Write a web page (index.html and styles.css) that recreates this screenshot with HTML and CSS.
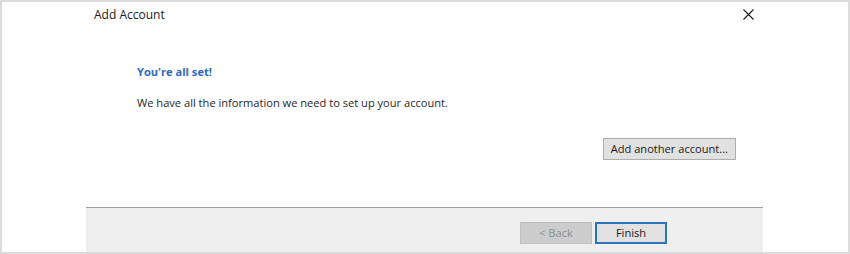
FILE: index.html
```html
<!DOCTYPE html>
<html lang="en">
<head>
    <meta charset="UTF-8">
    <title>Add Account</title>
    <link rel="stylesheet" href="styles.css">
</head>
<body>
    <div class="window">
        <div class="dialog">
            <div class="header">
                <span class="title">Add Account</span>
                <span class="close">
                    <svg width="11" height="11" viewBox="0 0 11 11">
                        <path d="M0.5 0.5 L10.5 10.5 M10.5 0.5 L0.5 10.5" stroke="#1a1a1a" stroke-width="1.1" fill="none"/>
                    </svg>
                </span>
            </div>
            <div class="content">
                <h2 class="done">You're all set!</h2>
                <p class="info">We have all the information we need to set up your account.</p>
                <div class="extra">
                    <button class="btn">Add another account...</button>
                </div>
            </div>
            <div class="footer">
                <button class="btn btn-disabled">&lt; Back</button>
                <button class="btn btn-default">Finish</button>
            </div>
        </div>
    </div>
</body>
</html>
```

FILE: styles.css
```css
html, body {
    margin: 0;
    padding: 0;
    background-color: #ffffff;
}
.window {
    width: 850px;
    height: 254px;
    box-sizing: border-box;
    border: 2px solid #dcdcdc;
    background-color: #ffffff;
    font-family: "Open Sans", "Noto Sans", sans-serif;
    font-size: 11.1px;
    color: #262626;
}
.dialog {
    margin-left: 84px;
    width: 677px;
    height: 250px;
    display: flex;
    flex-direction: column;
}
.header {
    height: 25px;
    display: flex;
    align-items: center;
    justify-content: space-between;
    padding: 0 9px 0 8px;
}
.title {
    font-size: 12px;
    color: #1a1a1a;
}
.close {
    display: flex;
    margin-top: -1px;
}
.content {
    flex: 1;
    padding: 37px 27px 0 51px;
}
.done {
    margin: 0;
    font-size: 11.1px;
    font-weight: 700;
    color: #2e6bc0;
    line-height: 16px;
}
.info {
    margin: 15px 0 0;
    line-height: 16px;
}
.extra {
    display: flex;
    justify-content: flex-end;
    margin-top: 27px;
}
.btn {
    font-family: "Open Sans", "Noto Sans", sans-serif;
    font-size: 11.1px;
    color: #1a1a1a;
    background-color: #e1e1e1;
    border: 1px solid #adadad;
    height: 22px;
    padding: 0 7px;
    margin: 0;
    line-height: 18px;
}
.footer {
    height: 45px;
    box-sizing: border-box;
    border-top: 1px solid #a0a0a0;
    background-color: #efefef;
    display: flex;
    justify-content: flex-end;
    align-items: flex-start;
    gap: 3px;
    padding: 14px 96px 0 0;
}
.footer .btn {
    width: 72px;
}
.btn-disabled {
    background-color: #cccccc;
    border-color: #bfbfbf;
    color: #8f8f8f;
}
.btn-default {
    border: 2px solid #2b73bb;
}
```
